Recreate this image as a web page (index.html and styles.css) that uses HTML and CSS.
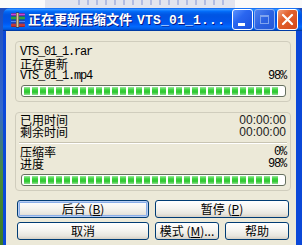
FILE: index.html
```html
<!DOCTYPE html>
<html>
  <head>
    <link rel="stylesheet" href="styles.css">
  </head>
  <body>

    <div class="desk-top">
      <div class="desk-label"></div>
    </div>

    <div class="window">
      <div class="titlebar">
        <svg class="app-icon" viewBox="0 0 16 16" width="16" height="16">
          <rect x="1" y="1" width="14" height="3" rx="1" fill="#7b2d9c"/>
          <rect x="1" y="2" width="14" height="1" fill="#c14bd8"/>
          <rect x="1" y="4.5" width="14" height="3" rx="1" fill="#1d7d2a"/>
          <rect x="1" y="5.5" width="14" height="1" fill="#49c257"/>
          <rect x="1" y="8" width="14" height="3" rx="1" fill="#1c46b5"/>
          <rect x="1" y="9" width="14" height="1" fill="#4d86f0"/>
          <rect x="1" y="11.5" width="14" height="3.5" rx="1" fill="#a32222"/>
          <rect x="1" y="12.5" width="14" height="1" fill="#e05050"/>
          <rect x="6" y="0.5" width="3" height="15" fill="#3a2a18"/>
          <rect x="6.5" y="1" width="2" height="14" fill="#d8c9a0"/>
        </svg>
        <span class="title">正在更新压缩文件<span class="title-file">VTS_01_1...</span></span>
        <div class="caption-buttons">
          <span class="cap cap-min"><i></i></span>
          <span class="cap cap-max"><i></i></span>
          <span class="cap cap-close">
            <svg viewBox="0 0 21 21" width="21" height="21">
              <path d="M6 6 L15 15 M15 6 L6 15" stroke="#fff" stroke-width="2.2" stroke-linecap="round"/>
            </svg>
          </span>
        </div>
      </div>

      <div class="frame">
        <div class="client">

          <div class="group">
            <div class="row mono">VTS_01_1.rar</div>
            <div class="row">正在更新</div>
            <div class="row"><span class="mono">VTS_01_1.mp4</span><span class="mono">98%</span></div>
            <div class="progress"><div class="fill" style="width: 98%"></div></div>
          </div>

          <div class="group group-stats">
            <div class="row"><span>已用时间</span><span class="num">00:00:00</span></div>
            <div class="row"><span>剩余时间</span><span class="num">00:00:00</span></div>
            <div class="separator"></div>
            <div class="row"><span>压缩率</span><span class="mono">0%</span></div>
            <div class="row"><span>进度</span><span class="mono">98%</span></div>
            <div class="progress"><div class="fill" style="width: 98%"></div></div>
          </div>

          <div class="buttons">
            <button class="btn btn-default">后台 (<u>B</u>)</button>
            <button class="btn btn-wide">暂停 (<u>P</u>)</button>
            <button class="btn">取消</button>
            <button class="btn">模式 (<u>M</u>)...</button>
            <button class="btn">帮助</button>
          </div>

        </div>
      </div>
    </div>

  </body>
</html>
```

FILE: styles.css
```css
* {box-sizing: border-box;}

body {
  margin: 0;
  width: 302px;
  height: 245px;
  overflow: hidden;
  font-family: "Noto Sans CJK SC", sans-serif;
  font-size: 12px;
  color: #000;
  background: linear-gradient(to bottom, #ffffff 0 8px, #1f4fbf 8px, #3468cc 110px, #4b8c39 175px, #3c7a28 245px);
}

.desk-top {
  height: 8px;
  display: flex;
  background: #fafafa;
}

/* blurred desktop text behind the window, only its lower edge shows */
.desk-label {
  margin-left: 45px;
  width: 190px;
  height: 8px;
  background:
    repeating-linear-gradient(to right, transparent 0 3px, rgba(120, 140, 210, 0.45) 3px 5px, transparent 5px 9px) 30px 0 / 150px 5px no-repeat,
    #e2e4ee;
}

.window {
  margin-left: 3px;
  width: 299px;
}

.titlebar {
  height: 23px;
  display: flex;
  align-items: center;
  padding: 0 4px 0 7px;
  border-radius: 7px 7px 0 0;
  background: linear-gradient(to bottom, #0058ee 0%, #3593ff 5%, #288eff 8%, #127dff 11%, #036ffc 14%, #0262ee 20%, #0057e5 28%, #0054e3 35%, #0055eb 60%, #005bf5 70%, #026afe 80%, #0062ef 88%, #0052d6 94%, #0040ab 97%, #003092 100%);
}

.app-icon {
  flex: none;
}

.title {
  margin-left: 2px;
  color: #fff;
  font-weight: bold;
  font-size: 13px;
  line-height: 15px;
  white-space: nowrap;
  text-shadow: 1px 1px 0 #0a1883;
}

.title-file {
  margin-left: 5px;
  font-family: "Liberation Mono", monospace;
  letter-spacing: 0.2px;
}

.caption-buttons {
  margin-left: auto;
  display: flex;
  gap: 1px;
}

.cap {
  width: 21px;
  height: 21px;
  border: 1px solid #fff;
  border-radius: 3px;
  position: relative;
  display: block;
}

.cap-min {
  background: linear-gradient(135deg, #5b93ff 0%, #2a66f0 40%, #1b50dc 100%);
}

.cap-min i {
  position: absolute;
  left: 5px;
  top: 13px;
  width: 7px;
  height: 3px;
  background: #fff;
}

.cap-max {
  border-color: #8fb0f0;
  background: linear-gradient(135deg, #4f82f0 0%, #2c62e2 50%, #2358d8 100%);
}

.cap-max i {
  position: absolute;
  left: 5px;
  top: 5px;
  width: 9px;
  height: 9px;
  border: 1px solid #7fa3ee;
  border-top-width: 2px;
}

.cap-close {
  margin-left: 1px;
  background: linear-gradient(135deg, #f0a080 0%, #e3632f 35%, #d4481a 100%);
}

.cap-close svg {
  position: absolute;
  left: -1px;
  top: -1px;
}

.frame {
  background: #0b48d8;
  padding: 0 6px 0 3px;
}

.client {
  background: #ece9d8;
  padding: 10px 5px 10px 9px;
}

.group {
  border: 1px solid #d0cdbd;
  border-radius: 4px;
  padding: 4px 4px 4px 4px;
}

.group-stats {
  margin-top: 10px;
  padding-top: 1px;
}

.row {
  height: 12px;
  line-height: 12px;
  display: flex;
  justify-content: space-between;
  white-space: nowrap;
}

.mono {
  font-family: "Liberation Mono", monospace;
  font-size: 12px;
  letter-spacing: -1.2px;
}

.num {
  font-family: "Liberation Sans", Arial, sans-serif;
  font-size: 12px;
  color: #222;
}

.separator {
  margin: 4px -1px 2px -1px;
  height: 2px;
  border-top: 1px solid #c8c4b2;
  border-bottom: 1px solid #fff;
}

.progress {
  margin: 3px 0 0 1px;
  height: 12px;
  border: 1px solid #66705f;
  border-radius: 3px;
  background: #fff;
  padding: 1px 2px;
}

.group-stats .progress {
  margin-top: 4px;
}

.fill {
  height: 100%;
  background-image:
    repeating-linear-gradient(to right, transparent 0 6px, #fff 6px 8px),
    linear-gradient(to bottom, #9ce89c 0%, #3ad23c 35%, #2cc72e 65%, #8fe08f 100%);
}

.buttons {
  margin: 9px 2px 0 2px;
  display: grid;
  grid-template-columns: 132px 64px 64px;
  grid-auto-rows: 18px;
  column-gap: 6px;
  row-gap: 4px;
}

.btn {
  font-family: "Noto Sans CJK SC", sans-serif;
  font-size: 12px;
  line-height: 14px;
  padding: 0;
  color: #000;
  border: 1px solid #003c74;
  border-radius: 3px;
  background: linear-gradient(to bottom, #ffffff 0%, #f5f4f0 45%, #e8e6df 80%, #d6d0c5 100%);
  white-space: nowrap;
}

.btn u {
  text-decoration-thickness: 1px;
}

.btn-default {
  box-shadow: inset 0 0 0 1px #b7cdf2, inset 0 0 0 2px #8aaee8;
}

.btn-wide {
  grid-column: span 2;
}
```
